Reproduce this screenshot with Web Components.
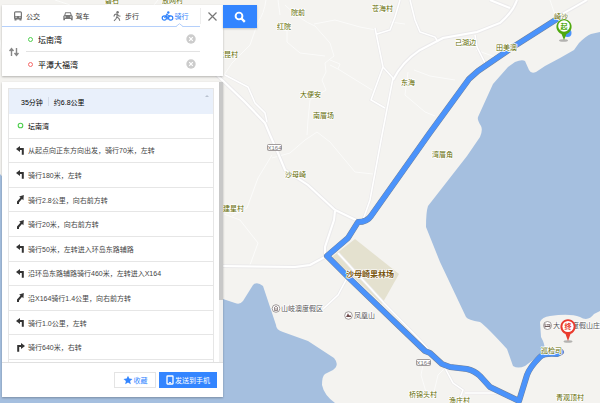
<!DOCTYPE html>
<html>
<head>
<meta charset="utf-8">
<title>骑行路线</title>
<style>
html, body { margin: 0; min-height: 100%; }
body { font-family: "Liberation Sans", "Noto Sans CJK SC", sans-serif; font-size: 7px; color: #222; background: #f4f3f0; }
</style>
</head>
<body>
<route-app></route-app>

<template id="t-app">
<style>
:host { display: block; position: relative; min-height: 100vh; overflow: hidden; }
route-map { position: absolute; inset: 0; }
.over { position: relative; display: flex; flex-direction: column; align-items: flex-start; gap: 6px; padding: 5px 2px; box-sizing: border-box; }
.top { display: flex; align-items: flex-start; }
</style>
<route-map></route-map>
<div class="over">
  <div class="top"><route-search></route-search><search-button></search-button></div>
  <route-result>
    <route-step turn="start">坛南湾</route-step>
    <route-step turn="left">从起点向正东方向出发，骑行70米，左转</route-step>
    <route-step turn="left">骑行180米，左转</route-step>
    <route-step turn="slight">骑行2.8公里，向右前方转</route-step>
    <route-step turn="slight">骑行20米，向右前方转</route-step>
    <route-step turn="left">骑行50米，左转进入环岛东路辅路</route-step>
    <route-step turn="left">沿环岛东路辅路骑行460米，左转进入X164</route-step>
    <route-step turn="slight">沿X164骑行1.4公里，向右前方转</route-step>
    <route-step turn="left">骑行1.0公里，左转</route-step>
    <route-step turn="right">骑行640米，右转</route-step>
  </route-result>
</div>
</template>

<template id="t-search">
<style>
:host { display: block; width: 221px; background: #fff; box-shadow: 0 1px 2px #0004; }
.bar { display: flex; height: 22px; }
.tabs { display: grid; grid-template-columns: repeat(4, 1fr); width: 198px; border-bottom: 1px solid #b5d0fb; }
.close { flex: 1; border: 0; background: none; padding: 0; display: grid; place-items: center; }
.close span { display: grid; place-items: center; width: 100%; height: 16px; border-left: 1px solid #eee; box-sizing: border-box; }
.body { display: flex; align-items: stretch; }
.swap { width: 24px; border: 0; background: none; padding: 0; display: grid; place-items: center; }
.stops { width: 174px; }
.stops route-stop + route-stop { border-top: 1px solid #e3e3e3; }
</style>
<div class="bar">
  <div class="tabs" role="tablist">
    <travel-mode icon="bus">公交</travel-mode>
    <travel-mode icon="car">驾车</travel-mode>
    <travel-mode icon="walk">步行</travel-mode>
    <travel-mode icon="bike" active>骑行</travel-mode>
  </div>
  <button class="close" aria-label="关闭"><span><svg width="9" height="9" viewBox="0 0 9 9"><path d="M.5.5l8 8M8.5.5l-8 8" stroke="#777" stroke-width="1.200" fill="none"/></svg></span></button>
</div>
<div class="body">
  <button class="swap" aria-label="交换起终点"><svg width="10" height="10" viewBox="0 0 10 10"><path d="M2.500 9V2M.5 4l2-2.500 2 2.500M7.500 1v7M5.500 6l2 2.500 2-2.500" stroke="#888" stroke-width="1.400" fill="none"/></svg></button>
  <div class="stops">
    <route-stop label="起点" value="坛南湾" color="#4fcf4f"></route-stop>
    <route-stop label="终点" value="平潭大福湾" color="#f56a6a"></route-stop>
  </div>
</div>
</template>

<template id="t-mode">
<style>
:host { display: block; position: relative; }
button { all: unset; box-sizing: border-box; width: 100%; height: 100%; display: flex; align-items: center; gap: 3px; padding-left: 11px; color: #333; }
:host([active]) button { color: #2f82fb; }
.i { display: flex; color: #777; }
:host([active]) .i { color: #2f82fb; }
.notch { display: none; position: absolute; left: 25px; bottom: -1px; }
:host([active]) .notch { display: block; }
</style>
<button role="tab"><span class="i"></span><slot></slot></button>
<svg class="notch" width="7" height="4" viewBox="0 0 7 4"><path d="M0 4L3.500.7 7 4z" fill="#fff"/><path d="M0 3.500L3.500.7 7 3.500" fill="none" stroke="#b5d0fb"/></svg>
</template>

<template id="t-stop">
<style>
:host { display: flex; align-items: center; height: 24px; padding-left: 2px; }
i { width: 3px; height: 3px; border: 1px solid var(--c); border-radius: 50%; }
input { flex: 1; min-width: 0; margin: 0 0 0 5px; padding: 0; border: 0; outline: 0; background: none; font: inherit; font-size: 8px; color: #000; }
button { all: unset; display: flex; margin-right: 4px; }
</style>
<i></i><input><button aria-label="清除"><svg width="10" height="10" viewBox="0 0 10 10"><circle cx="5" cy="5" r="4.700" fill="#ccc"/><path d="M3.200 3.200l3.600 3.600M6.800 3.200L3.200 6.800" stroke="#fff" stroke-width="1.200"/></svg></button>
</template>

<template id="t-searchbtn">
<style>
:host { display: block; }
button { width: 34px; height: 23px; border: 0; padding: 0; background: #3385ff; display: grid; place-items: center; box-shadow: 0 1px 2px #0003; }
</style>
<button aria-label="搜索"><svg width="12" height="12" viewBox="0 0 12 12" fill="none" stroke="#fff"><circle cx="5" cy="5" r="3.400" stroke-width="1.900"/><path d="M7.500 7.500l3.300 3.300" stroke-width="2.400"/></svg></button>
</template>

<template id="t-result">
<style>
:host { display: block; width: 221px; background: #fff; box-shadow: 0 1px 2px #0004; }
.view { display: flex; border-bottom: 1px solid #e0e0e0; }
.list { flex: 1; margin: 6px 5px 0 6px; border: solid #e6e6e6; border-width: 1px 1px 0; padding-bottom: 2px; }
.bar { width: 4px; background: #f0f0f0; }
.bar::before { content: ""; display: block; height: 78%; background: #c8c8c8; }
.head { display: flex; align-items: center; gap: 5px; height: 25px; padding: 0 4px 0 12px; background: #e9f0fb; color: #000; }
.head i { width: 1px; height: 9px; background: #d3dbe8; }
.head svg { margin: 0 0 12px auto; }
.steps { display: grid; grid-auto-rows: 1fr; min-height: 246px; }
.foot { display: flex; justify-content: flex-end; gap: 3px; padding: 9px 6px; }
.foot button { display: flex; align-items: center; justify-content: center; gap: 1px; height: 16px; box-sizing: border-box; padding: 0 7px; border: 1px solid #e4e4e4; background: #fff; color: #3385ff; font: inherit; white-space: nowrap; }
.foot .fav { width: 42px; }
.foot .send { background: #3385ff; border-color: #3385ff; color: #fff; width: 58px; padding: 0; }
</style>
<div class="view">
  <div class="list">
    <div class="head"><span>35分钟</span><i></i><span>约6.8公里</span><svg width="4" height="2" viewBox="0 0 4 2"><path d="M0 2l2-2 2 2z" fill="#b9c2d0"/></svg></div>
    <div class="steps" role="list"><slot></slot></div>
  </div>
  <div class="bar"></div>
</div>
<div class="foot">
  <button class="fav"><svg width="10" height="10" viewBox="0 0 10 10"><path d="M5 .7l1.300 2.900 3.200.3-2.400 2.200.7 3.200L5 7.600 2.200 9.300l.7-3.200L.5 3.900l3.200-.3z" fill="#3385ff"/></svg>收藏</button>
  <button class="send"><svg width="8" height="10" viewBox="0 0 8 10"><rect x="1" y="1" width="6" height="8" rx=".5" fill="none" stroke="#fff" stroke-width="1.300"/><path d="M3 7.600h2" stroke="#fff"/></svg>发送到手机</button>
</div>
</template>

<template id="t-step">
<style>
:host { display: flex; align-items: center; gap: 3px; padding-left: 7px; color: #444; border-bottom: 1px solid #e6e6e6; white-space: nowrap; }
:host([turn=start]) { color: #000; }
</style>
<svg width="9" height="9" viewBox="0 0 9 9" fill="none"></svg><slot></slot>
</template>

<template id="t-map">
<style>
:host { display: block; background: #f4f3f0; }
svg { display: block; width: 100%; height: 100%; }
.water { fill: #a5bfdf; }
.park { fill: #e4e1cf; }
.thin { fill: none; stroke: #fbfbfa; stroke-width: 1; }
.case { fill: none; stroke: #ebeaeb; stroke-width: 4; }
.case.minor { stroke-width: 3; }
.road { fill: none; stroke: #fff; stroke-width: 2; }
.road.minor { stroke-width: 1.500; }
.edge, .route { fill: none; stroke-linejoin: round; stroke-linecap: round; }
.edge { stroke: #71829c; stroke-width: 6; }
.route { stroke: #4b93fb; stroke-width: 5; }
text { font-size: 7px; dominant-baseline: central; paint-order: stroke; stroke: #fff; stroke-width: 1.500px; stroke-linejoin: round; fill: #626a00; }
.poi { fill: #555; }
.big { font-size: 8px; font-weight: bold; fill: #7a5712; }
.no { font-size: 6px; fill: #777; stroke: none; text-anchor: middle; }
.pin { font-weight: bold; stroke: none; text-anchor: middle; }
.start { fill: #4fa90e; }
.end { fill: #ea3b2e; }
</style>
<svg viewBox="0 0 600 403" preserveAspectRatio="xMinYMin slice">
  <path class="water" d="M600 32L591 34Q586 36 579 43L574 50 560 58 545 66 536 72Q531 74 529 70L525 61Q522 59 515 62L508 67 493 84 478 117Q477 120 481 126 483 130 480 137L467 156 428 206Q426 212 426 227L440 262 466 317Q468 320 480 322 486 326 507 349L513 366Q518 369 525 366L545 351Q545 344 541 337L540 322Q542 317 550 316 570 313 580 317 588 322 594 314L600 311z"/>
  <path class="water" d="M0 174L60 240 170 280 223 299 235 303Q240 305 243 301L253 285Q257 281 263 286L276 325Q276 330 283 332L308 341 334 358Q340 365 333 370L325 374Q322 376 322 385 324 395 335 403H0z"/>
  <path class="park" d="M355 239L399 274 382 304 332 257z"/>
  <g class="thin">
    <path d="M266 0Q264 14 258 22L250 45 232 63 222 78M278 0L280 15M285 5Q300 20 315 26L330 43 334 56 325 63 326 72 322 80 326 90 310 100 308 120 307 135M287 30V42L300 53 325 56M314 24L335 20 360 27 376 30M330 60L340 64 338 69 330 65M338 69L372 90M390 22L405 24M272 158L290 153 305 140 317 132 330 142 355 172 373 174M272 155L258 178 247 208 232 216M224 214L240 220 258 243 250 265M408 72L405 95 425 112 435 116M414 70L430 76 455 80M476 50L495 57M550 0L556 18M423 365L421 375 426 392M445 368L438 375 434 392M55 0L70 5M158 0L154 5M0 40L3 60"/>
  </g>
  <path class="case" d="M200 60L220 78 245 102 265 123 270 135 278 153 285 170 308 185 335 210 358 221M335 211L334 220 325 247V257L310 265 295 267 223 266M393 80Q402 62 420 50L443 38 477 32 500 23Q513 12 517 0M557 17L587 0M490 0L510 8"/>
  <path class="case minor" d="M393 78L382 135 370 200 363 220M410 0L415 20 420 32 435 37 438 42M475 35L477 47 485 63M400 0L395 17 390 30 377 34M375 28L383 67 393 78M383 67L371 100 385 108M225 75L248 87 255 103 265 113 267 122M347 278L338 295 323 309M338 253L384 303 420 340 445 368M445 368L453 383 463 390 458 403M465 393L497 393"/>
  <path class="road" d="M200 60L220 78 245 102 265 123 270 135 278 153 285 170 308 185 335 210 358 221M335 211L334 220 325 247V257L310 265 295 267 223 266M393 80Q402 62 420 50L443 38 477 32 500 23Q513 12 517 0M557 17L587 0M490 0L510 8"/>
  <path class="road minor" d="M393 78L382 135 370 200 363 220M410 0L415 20 420 32 435 37 438 42M475 35L477 47 485 63M400 0L395 17 390 30 377 34M375 28L383 67 393 78M383 67L371 100 385 108M225 75L248 87 255 103 265 113 267 122M347 278L338 295 323 309M338 253L384 303 420 340 445 368M445 368L453 383 463 390 458 403M465 393L497 393"/>
  <path class="edge" d="M557 19L513 47 478 71 469 79 429 134 371 216Q367 222 358 222L348 238 327 256 348 277 400 327 425 351 430 353 442 364 450 367 467 369Q475 371 480 376L490 387 519 401 527 375Q530 367 540 357 544 353 557 354L561 352"/>
  <path class="route" d="M557 19L513 47 478 71 469 79 429 134 371 216Q367 222 358 222L348 238 327 256 348 277 400 327 425 351 430 353 442 364 450 367 467 369Q475 371 480 376L490 387 519 401 527 375Q530 367 540 357 544 353 557 354L561 352"/>
  <circle cx="567.500" cy="33" r="4" fill="#4b93fb"/>
  <g id="labels"></g>
  <g fill="#fff" stroke="#8b8585" stroke-width=".8">
    <rect x="267.500" y="144.500" width="14" height="6" rx="1"/><rect x="416.500" y="359.500" width="14" height="6" rx="1"/>
    <circle cx="276" cy="308.500" r="3.800"/><circle cx="348.500" cy="315.500" r="3.800"/><circle cx="547.500" cy="325.500" r="4"/>
  </g>
  <path d="M274 308l2-1.800 2 1.800M274.500 308v2.500h3V308M276 308v2" fill="none" stroke="#6f5c5c" stroke-width=".7"/>
  <path d="M346 317l2-3.800 1.300 2.600.8-1 1.200 2.200z" fill="#6f4a4a"/>
  <path d="M545 323.500v4M545 326.500h5v1M550 326v-1.200h-3.500" fill="none" stroke="#6f5c5c"/>
  <text class="no" x="274.500" y="148">X164</text><text class="no" x="423.500" y="363">X164</text>
  <ellipse cx="563.500" cy="40.500" rx="4.500" ry="1.300" fill="#0004"/>
  <path d="M564 40l-2.500-6a7.600 7.600 0 1 1 5 0z" fill="#4fa90e"/><circle cx="564" cy="26" r="5.800" fill="#fff"/>
  <text class="pin start" x="564" y="26">起</text>
  <ellipse cx="568" cy="341.500" rx="4.500" ry="1.300" fill="#0004"/>
  <path d="M568 341l-2.500-7a7.600 7.600 0 1 1 5 0z" fill="#ea3b2e"/><circle cx="568" cy="326.500" r="5.600" fill="#fff"/>
  <text class="pin end" x="568" y="326.500">终</text>
</svg>
</template>

<script>
const define = (name, id, setup) => customElements.define(name, class extends HTMLElement {
  constructor() {
    super();
    this.attachShadow({ mode: 'open' }).append(document.getElementById(id).content.cloneNode(true));
  }
  connectedCallback() { if (setup) setup(this, this.shadowRoot); }
});

const MODE_ICONS = {
  bus: '<rect x="1.600" y=".8" width="6.800" height="7" rx="1" fill="none" stroke="currentColor" stroke-width="1.200"/><path d="M1.500 5h7v3h-7zM1.500 7.500h2v2h-2zM6.500 7.500h2v2h-2z" fill="currentColor"/><path d="M2.500 6.200h1.200M6.300 6.200h1.200" stroke="#fff"/>',
  car: '<path d="M2.200 1.200h5.600l1 3 .9.700v4.300H8V8H2v1.200H.3V4.900l.9-.7z" fill="currentColor"/><path d="M2.900 2.200h4.200l.5 1.800H2.400z" fill="#fff"/><path d="M1.400 6h1.500M7.100 6h1.500" stroke="#fff"/>',
  walk: '<circle cx="5.600" cy="1.200" r="1.200" fill="currentColor"/><path d="M5 3v3l2 1.500.8 2.300M5 5.500L4 7.800 2 9.800M1.800 5.500L2.800 3.500 5 2.900l1.500 1.800 2 .5" fill="none" stroke="currentColor" stroke-width="1.100"/>',
  bike: '<g fill="none" stroke="currentColor" stroke-width="1.200"><circle cx="2.300" cy="7" r="2.100"/><circle cx="8.700" cy="7" r="2.100"/><path d="M2.500 6.800L5 3.200l1.500 1.600H8.500M5 3.400L3.800 5l1.900 1v2.500"/></g><circle cx="6.300" cy="1.500" r="1.200" fill="currentColor"/>'
};
const TURN_ICONS = {
  start: '<circle cx="4.500" cy="4.500" r="2.300" stroke="#4fcf4f" stroke-width="1.100"/>',
  left: '<path d="M6.800 8.800V3H3" stroke="#333" stroke-width="2"/><path d="M0 3L4 0v6z" fill="#333"/>',
  right: '<path d="M2.200 8.800V3H6" stroke="#333" stroke-width="2"/><path d="M9 3L5 0v6z" fill="#333"/>',
  slight: '<path d="M2 8.900V7L5.800 2.700" stroke="#333" stroke-width="2"/><path d="M7.800.1L7.400 5.200 3.200 1.500z" fill="#333"/>'
};
const LABELS = [
  [105, 0, '碧石'], [162, 0, '放网村'], [291, 12, '院前'], [277, 26, '红院'], [372, 8, '苍海村'], [217, 54, '东昆村'],
  [300, 94, '大便安'], [313, 115, '南厝场'], [401, 82, '东海'], [455, 42, '己湖边'], [496, 47, '田美澳'], [554, 16, '崎沙'],
  [285, 174, '沙母崎'], [223, 208, '建星村'], [432, 154, '湾厝角'], [409, 394, '桥锦头村'], [449, 400, '渔庄村'],
  [556, 397, '青观顶村'], [541, 350, '巡检司'], [346, 274, '沙母崎果林场', 'big'],
  [281, 308, '山岐澳度假区', 'poi'], [354, 315, '凤凰山', 'poi'], [553, 325, '大', 'poi'], [572, 325, '度假山庄', 'poi']
];

define('travel-mode', 't-mode', (el, root) => {
  root.querySelector('.i').innerHTML = `<svg width="10" height="10" viewBox="0 0 10 10" overflow="visible">${MODE_ICONS[el.getAttribute('icon')]}</svg>`;
  root.querySelector('button').setAttribute('aria-selected', el.hasAttribute('active'));
});
define('route-stop', 't-stop', (el, root) => {
  el.style.setProperty('--c', el.getAttribute('color'));
  const input = root.querySelector('input');
  input.value = el.getAttribute('value');
  input.setAttribute('aria-label', el.getAttribute('label'));
});
define('route-step', 't-step', (el, root) => {
  el.setAttribute('role', 'listitem');
  root.querySelector('svg').innerHTML = TURN_ICONS[el.getAttribute('turn')];
});
define('route-map', 't-map', (el, root) => {
  root.getElementById('labels').innerHTML = LABELS.map(([x, y, t, c = '']) => `<text x="${x}" y="${y}" class="${c}">${t}</text>`).join('');
});
define('search-button', 't-searchbtn');
define('route-search', 't-search');
define('route-result', 't-result');
define('route-app', 't-app');
</script>
</body>
</html>
